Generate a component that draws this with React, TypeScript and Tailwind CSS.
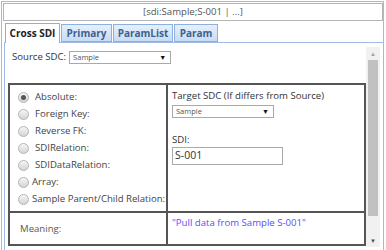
import React from 'react';

const tabs = ['Cross SDI', 'Primary', 'ParamList', 'Param'];

const options: { label: string; pad: string; checked?: boolean }[] = [
  { label: 'Absolute:', pad: 'ml-[6px]', checked: true },
  { label: 'Foreign Key:', pad: 'ml-[6px]' },
  { label: 'Reverse FK:', pad: 'ml-[6px]' },
  { label: 'SDIRelation:', pad: 'ml-[6px]' },
  { label: 'SDIDataRelation:', pad: 'ml-[6px]' },
  { label: 'Array:', pad: 'ml-[3px]' },
  { label: 'Sample Parent/Child Relation:', pad: 'ml-[3px]' },
];

const Radio = ({ checked }: { checked?: boolean }) => (
  <span className="flex h-[11px] w-[11px] shrink-0 items-center justify-center rounded-full border border-[#b4b4b4] bg-linear-to-b from-[#f6f6f6] to-[#d4d4d4]">
    {checked && <span className="h-[5px] w-[5px] rounded-full bg-[#555]" />}
  </span>
);

const Select = ({ width }: { width: string }) => (
  <div className={`flex h-[13px] items-center justify-between border border-[#a9a9a9] bg-white pl-[3px] pr-[4px] ${width}`}>
    <span className="text-[7.5px] leading-none text-[#555]">Sample</span>
    <span className="text-[7px] leading-none text-[#111]">▼</span>
  </div>
);

export default function App() {
  return (
    <div className="h-[250px] w-[386px] overflow-hidden bg-white pl-[1px] pt-[1px] font-['Open_Sans',sans-serif] text-[9.6px] text-[#333]">
      <div className="h-[260px] w-[383px] border-l border-r border-t border-[#9fbbe3]">
        {/* title bar */}
        <div className="ml-[1px] mt-[1px] flex h-[18px] items-center justify-center border border-[#b4b4b4] text-[9.6px] text-[#555]">
          [sdi:Sample;S-001 | ...]
        </div>

        {/* tabs */}
        <div className="ml-[3px] mt-[2px] flex h-[19px] items-end gap-[1px]">
          {tabs.map((t, i) =>
            i === 0 ? (
              <div
                key={t}
                className="relative z-10 -mb-[1px] flex h-[20px] w-[55px] items-center justify-center border border-b-0 border-[#8eb0dc] bg-white text-[10px] font-bold text-[#222]"
              >
                {t}
              </div>
            ) : (
              <div
                key={t}
                className={`flex h-[18px] items-center justify-center border border-[#8eb0dc] bg-linear-to-b from-[#e6f0fb] to-[#c9dcf3] text-[10px] font-bold text-[#3b6190] ${
                  i === 1 ? 'w-[51px]' : i === 2 ? 'w-[60px]' : 'w-[44px]'
                }`}
              >
                {t}
              </div>
            )
          )}
        </div>

        {/* panel */}
        <div className="ml-[2px] flex h-[220px] border-l border-t border-[#9fbbe3]">
          <div className="w-[361px] pl-[3px]">
            <div className="ml-[4px] mt-[8px] flex h-[13px] items-center gap-[3px]">
              <span className="whitespace-nowrap">Source SDC:</span>
              <Select width="w-[102px]" />
            </div>

            <div className="mt-[19px] w-[358px] border-2 border-[#555]">
              <div className="flex h-[126px]">
                <div className="w-[158px] shrink-0 border-r-2 border-[#555] pl-[8px] pt-[4px]">
                  {options.map((o) => (
                    <div key={o.label} className="flex h-[17px] items-center">
                      <Radio checked={o.checked} />
                      <span className={`${o.pad} whitespace-nowrap text-[#444]`}>{o.label}</span>
                    </div>
                  ))}
                </div>
                <div className="flex-1 pl-[4px] pt-[4px]">
                  <div className="whitespace-nowrap leading-[13px] text-[#333]">Target SDC (If differs from Source)</div>
                  <div className="mt-[3px]">
                    <Select width="w-[102px]" />
                  </div>
                  <div className="mt-[15px] leading-[13px]">SDI:</div>
                  <div className="mt-[1px] flex h-[18px] w-[111px] items-center border border-[#aaa] pl-[2px] text-[10.5px] text-[#333]">
                    S-001
                  </div>
                </div>
              </div>
              <div className="flex h-[33px] border-t-2 border-[#555]">
                <div className="w-[158px] shrink-0 border-r-2 border-[#555] pl-[10px] pt-[9px] text-[#665544]">Meaning:</div>
                <div className="flex-1 whitespace-nowrap pl-[4px] pt-[3px] text-[#5b4ef5]">"Pull data from Sample S-001"</div>
              </div>
            </div>
          </div>

          {/* scrollbar */}
          <div className="mt-[4px] flex h-[200px] w-[14px] flex-col items-center bg-[#f1f1f1]">
            <div className="flex h-[13px] items-center justify-center text-[6px] leading-none text-[#a3a3a3]">▲</div>
            <div className="h-[156px] w-[10px] bg-[#c1c1c1]" />
            <div className="flex-1" />
            <div className="flex h-[13px] items-center justify-center text-[6px] leading-none text-[#505050]">▼</div>
          </div>
        </div>
      </div>
    </div>
  );
}
